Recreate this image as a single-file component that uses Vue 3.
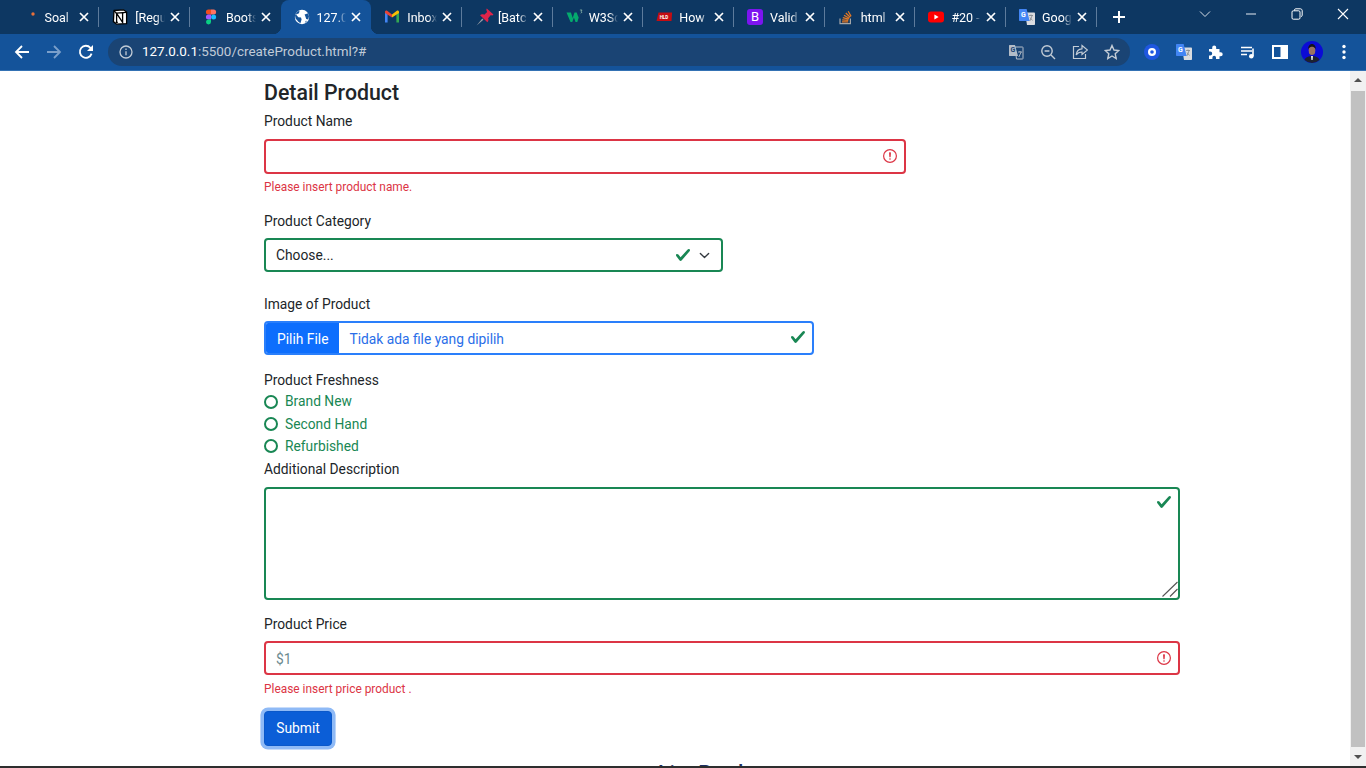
<template>
  <div class="screen">
    <div class="tabstrip">
      <div class="tabs">
        <div v-for="tab in tabs" :key="tab.icon" class="tab" :class="{ active: tab.active, nosep: tab.nosep }">
          <span class="favicon">
            <svg v-if="tab.icon === 'dot'" width="16" height="16" viewBox="0 0 16 16"><circle cx="11" cy="5" r="1.7" fill="#e8703a" /></svg>
            <svg v-else-if="tab.icon === 'notion'" width="16" height="16" viewBox="0 0 16 16">
              <path d="M2 1.5 11.5.8 14.6 3v11.6L4.6 15.2 1.4 12.6z" fill="#fff" stroke="#000" stroke-width="1.3" />
              <path d="M4.6 4.4v9M4.6 4.4l6 9V3.8M3.6 4.4h2.2M9.4 3.9h2.4M3.6 13.3h2.2M2 2l2.6 2.2 9.6-.8" fill="none" stroke="#000" stroke-width="1.3" />
            </svg>
            <svg v-else-if="tab.icon === 'figma'" width="16" height="16" viewBox="0 0 16 16">
              <path d="M8 0.5H5.4a2.5 2.5 0 0 0 0 5H8z" fill="#f24e1e" />
              <path d="M8 0.5h2.6a2.5 2.5 0 0 1 0 5H8z" fill="#ff7262" />
              <path d="M8 5.5H5.4a2.5 2.5 0 0 0 0 5H8z" fill="#a259ff" />
              <circle cx="10.6" cy="8" r="2.5" fill="#1abcfe" />
              <path d="M5.4 10.5H8V13a2.5 2.5 0 1 1-2.6-2.5z" fill="#0acf83" />
            </svg>
            <svg v-else-if="tab.icon === 'globe'" width="16" height="16" viewBox="0 0 16 16">
              <circle cx="8" cy="8" r="7.2" fill="#fff" />
              <path d="M5.6 1.6 5 4.2 2 5.6 4.4 8.2l2.6.4.6 2-1.2 3.6-2-1.4L1.6 9.6 1 6.4 3 3zM10.6 5.4l3.6-1.2.8 3.4-.8 3-2-.6-.8-2.4zM12 11.6l.8.6-2 1.8z" fill="#14539a" />
            </svg>
            <svg v-else-if="tab.icon === 'gmail'" width="16" height="16" viewBox="0 0 16 16">
              <path d="M1 13.5V4l2.6-.6V13.5z" fill="#4285f4" />
              <path d="M12.4 13.5V3.4L15 4v9.5z" fill="#34a853" />
              <path d="M1 4V2.8C1 1.6 2.3 1 3.2 1.7L8 5.4v3L1 4z" fill="#ea4335" />
              <path d="M15 4V2.8c0-1.2-1.3-1.8-2.2-1.1L8 5.4v3L15 4z" fill="#fbbc04" />
            </svg>
            <svg v-else-if="tab.icon === 'pin'" class="pin-icon" width="18" height="18" viewBox="0 0 16 16">
              <path d="M.5 15.500 5.600 9.400l1 1z" fill="#9aa0a6" />
              <path d="M9.600.5 15.500 5.800c-.6.9-1.500.9-2.300.5L10.800 9c.6 1.500.2 2.700-.7 3.600L3.600 6.400c1-.9 2.300-1.100 3.700-.4l2.600-2.500C9.300 2.300 8.900 1.300 9.600.5z" fill="#e0244a" />
            </svg>
            <svg v-else-if="tab.icon === 'w3'" class="wide-icon" width="17" height="16" viewBox="0 0 16 16">
              <path d="M0 3.500h4.400l1.800 5.600L8 3.500h2.200l1.800 5L13.800 3.500 10.800 13H9L7.400 8.600 5.800 13H4z" fill="#04aa6d" />
              <path d="M13.400 1h2.200l-1 1.200.9 1-1.300 1" fill="none" stroke="#9cc9b6" stroke-width=".7" />
            </svg>
            <svg v-else-if="tab.icon === 'hld'" class="wide-icon" width="17" height="16" viewBox="0 0 16 16">
              <path d="M2 3.500h13.600L15 12H0z" fill="#c40d12" />
              <text x="3.200" y="9.800" class="hld-mark">HLD</text>
            </svg>
            <span v-else-if="tab.icon === 'bootstrap'" class="bs-icon">B</span>
            <svg v-else-if="tab.icon === 'so'" width="16" height="16" viewBox="0 0 16 16">
              <path d="M2 9.500v5.200h10.400V9.500" fill="none" stroke="#a4a6a8" stroke-width="1.200" />
              <path d="M4 12.800h6.200M4.200 10.800l6.100.6M4.800 8.600l5.900 1.600M6 6.200l5.300 3M7.800 4l4.400 4.300M10.200 2.200l2.900 5.200" fill="none" stroke="#e87922" stroke-width="1.200" />
            </svg>
            <svg v-else-if="tab.icon === 'youtube'" width="16" height="16" viewBox="0 0 16 16">
              <rect x="0" y="2.400" width="16" height="11.200" rx="3" fill="#f00" />
              <path d="m6.400 5.600 4.200 2.400-4.200 2.400z" fill="#fff" />
            </svg>
            <svg v-else width="16" height="16" viewBox="0 0 16 16">
              <path d="M6 3.500h9.200c.5 0 .8.300.8.800v10.900c0 .5-.3.800-.8.800H8z" fill="#dadce0" />
              <path d="m10 6.500h4M12 5.500v1M10.800 12l2.400-5.500M11 8.500l2.500 3" fill="none" stroke="#80868b" stroke-width=".8" />
              <path d="M1 0h6.600l3 12H1c-.6 0-1-.4-1-1V1c0-.6.400-1 1-1z" fill="#4285f4" />
              <text x="2" y="8" class="g-mark">G</text>
            </svg>
          </span>
          <span class="tab-title">{{ tab.title }}</span>
          <svg class="tab-close" width="10" height="10" viewBox="0 0 10 10"><path d="m1 1 8 8M9 1 1 9" stroke="#fff" stroke-width="1.700" /></svg>
        </div>
        <svg class="new-tab" width="14" height="14" viewBox="0 0 14 14"><path d="M7 1v12M1 7h12" stroke="#fff" stroke-width="2" /></svg>
      </div>
      <div class="window-controls">
        <svg width="12" height="12" viewBox="0 0 12 12"><path d="m1 3.500 5 5 5-5" fill="none" stroke="#d5dde6" /></svg>
        <svg width="12" height="12" viewBox="0 0 12 12"><path d="M1 6h10" stroke="#e8edf3" /></svg>
        <svg width="12" height="12" viewBox="0 0 12 12"><path d="M3.500 2.500V2c0-.7.500-1.200 1.200-1.200h4.600c1.100 0 1.900.8 1.900 1.900v4.600c0 .7-.5 1.200-1.200 1.200" fill="none" stroke="#fff" /><rect x="1" y="2.800" width="8" height="8.400" rx="1.300" fill="none" stroke="#fff" /></svg>
        <svg width="12" height="12" viewBox="0 0 12 12"><path d="m1 1 10 10M11 1 1 11" stroke="#fff" stroke-width="1.100" /></svg>
      </div>
    </div>

    <div class="toolbar">
      <div class="nav-buttons">
        <svg width="16" height="16" viewBox="0 0 16 16"><path d="M15 8H2M8 2 2 8l6 6" fill="none" stroke="#fff" stroke-width="1.800" /></svg>
        <svg width="16" height="16" viewBox="0 0 16 16"><path d="M1 8h13M8 2l6 6-6 6" fill="none" stroke="#7b9fca" stroke-width="1.800" /></svg>
        <svg width="16" height="16" viewBox="0 0 16 16"><path d="M13.600 9.600A6 6 0 1 1 12.400 3.800L14.500 6" fill="none" stroke="#fff" stroke-width="1.800" /><path d="M15 1v6H9z" fill="#fff" /></svg>
      </div>
      <div class="omnibox">
        <svg width="14" height="14" viewBox="0 0 14 14"><circle cx="7" cy="7" r="6" fill="none" stroke="#c3ccd6" stroke-width="1.300" /><path d="M7 6.200v4M7 3.600v1.400" stroke="#c3ccd6" stroke-width="1.300" /></svg>
        <span class="url"><b>127.0.0.1</b>:5500/createProduct.html?#</span>
        <span class="omni-actions">
          <svg width="16" height="16" viewBox="0 0 16 16">
            <path d="M7 3h7.500c.3 0 .5.200.5.500v11c0 .3-.2.500-.5.500H8.500z" fill="none" stroke="#b4bdc8" />
            <path d="M1.500 1H7l3 11H1.500c-.3 0-.5-.2-.5-.5v-10c0-.3.200-.5.500-.5z" fill="#b4bdc8" />
            <path d="M10 8h4M12 7v1M10.800 13l2.400-5" fill="none" stroke="#b4bdc8" stroke-width=".9" />
            <text x="2.400" y="8.400" class="g-mark dark">G</text>
          </svg>
          <svg width="16" height="16" viewBox="0 0 16 16"><circle cx="7" cy="7" r="5.200" fill="none" stroke="#c3ccd6" stroke-width="1.400" /><path d="m11 11 4 4M4.600 7h4.800" stroke="#c3ccd6" stroke-width="1.400" /></svg>
          <svg width="16" height="16" viewBox="0 0 16 16"><path d="M7 2.500H1.500V14.500h12V10" fill="none" stroke="#c3ccd6" stroke-width="1.200" /><path d="M10 1.500 15.500 6 10 10.500V8C7.500 8 5.500 9 4.200 11c.3-3.500 2.600-6 5.800-6.200z" fill="none" stroke="#c3ccd6" stroke-width="1.200" /></svg>
          <svg width="16" height="16" viewBox="0 0 16 16"><path d="m8 1.500 2 4.500 4.800.5-3.600 3.200 1 4.800L8 12l-4.200 2.500 1-4.800L1.200 6.500 6 6z" fill="none" stroke="#c3ccd6" stroke-width="1.400" /></svg>
        </span>
      </div>
      <div class="extensions">
        <svg width="16" height="16" viewBox="0 0 16 16"><circle cx="8" cy="8" r="8" fill="#1f57e0" /><circle cx="8" cy="8" r="4" fill="#fff" /><circle cx="8" cy="8" r="1.800" fill="#1f57e0" /></svg>
        <svg width="16" height="16" viewBox="0 0 16 16">
          <path d="M6 3.500h9.200c.5 0 .8.300.8.800v10.900c0 .5-.3.800-.8.800H8z" fill="#dadce0" />
          <path d="m10 6.500h4M12 5.500v1M10.800 12l2.400-5.500M11 8.500l2.500 3" fill="none" stroke="#80868b" stroke-width=".8" />
          <path d="M1 0h6.600l3 12H1c-.6 0-1-.4-1-1V1c0-.6.400-1 1-1z" fill="#4285f4" />
          <text x="2" y="8" class="g-mark">G</text>
        </svg>
        <svg width="16" height="16" viewBox="0 0 16 16"><path d="M1 5h3.200V3.600a2 2 0 0 1 4 0V5H11.500v3.200h1.200a2 2 0 0 1 0 4h-1.200V15H8v-1.400a1.800 1.800 0 0 0-3.600 0V15H1v-3.600h1.200a2 2 0 0 0 0-4H1z" fill="#fff" /></svg>
        <svg width="16" height="16" viewBox="0 0 16 16"><path d="M1 3.500h11M1 7h11M1 10.500h6" stroke="#fff" stroke-width="1.300" /><path d="M13 4.500V12" stroke="#fff" stroke-width="1.600" /><circle cx="11.300" cy="12.300" r="2.300" fill="#fff" /></svg>
        <svg width="16" height="16" viewBox="0 0 16 16"><path d="M1 2h14v12H1z" fill="none" stroke="#fff" stroke-width="2" /><rect x="8.500" y="2" width="6" height="12" fill="#fff" /></svg>
        <svg width="22" height="22" viewBox="0 0 22 22">
          <circle cx="11" cy="11" r="11" fill="#0b0bd6" />
          <path d="M3.500 19c1-3 4.500-4 7.500-4s6.500 1 7.500 4a11 11 0 0 1-15 0z" fill="#1c2230" />
          <ellipse cx="11" cy="9.500" rx="3.300" ry="4.600" fill="#9c7361" />
          <path d="M7.300 8c-.3-3.500 2-5 3.700-5s4 1.500 3.700 5c-1-1.600-2.500-2.200-3.700-2.200S8.300 6.400 7.300 8z" fill="#15131a" />
          <path d="M10 15h2l-.4 4h-1.200z" fill="#f1f1f1" />
        </svg>
        <svg width="4" height="16" viewBox="0 0 4 16"><circle cx="2" cy="2.500" r="1.700" fill="#fff" /><circle cx="2" cy="8" r="1.700" fill="#fff" /><circle cx="2" cy="13.500" r="1.700" fill="#fff" /></svg>
      </div>
    </div>

    <div class="viewport">
      <main class="page">
        <form class="product-form" @submit.prevent>
          <h2 class="title">Detail Product</h2>

          <label class="field-label first">Product Name</label>
          <div class="control w70">
            <input class="input invalid" type="text" />
            <svg class="state-icon" width="16" height="16" viewBox="0 0 12 12"><circle cx="6" cy="6" r="4.800" fill="none" stroke="#dc3545" stroke-width=".9" /><path d="M5.800 3.600h.4L6 6.500z" fill="#dc3545" stroke="#dc3545" stroke-linejoin="round" /><circle cx="6" cy="8.200" r=".6" fill="#dc3545" /></svg>
          </div>
          <p class="feedback">Please insert product name.</p>

          <label class="field-label">Product Category</label>
          <div class="control w50 select-gap">
            <select class="input valid select"><option>Choose...</option></select>
            <svg class="state-icon select-check" width="16" height="16" viewBox="0 0 8 8"><path fill="#198754" d="M2.300 6.730.6 4.530c-.4-1.040.46-1.400 1.100-.8l1.100 1.400 3.400-3.800c.6-.63 1.600-.27 1.200.7l-4 4.600c-.43.500-.8.400-1.100.1z" /></svg>
            <svg class="state-icon" width="11" height="11" viewBox="0 0 16 16"><path fill="none" stroke="#343a40" stroke-linecap="round" stroke-linejoin="round" stroke-width="2" d="m2 5 6 6 6-6" /></svg>
          </div>

          <label class="field-label">Image of Product</label>
          <div class="control w60 gap-bottom">
            <div class="file-input">
              <span class="file-button">Pilih File</span>
              <span class="file-name">Tidak ada file yang dipilih</span>
            </div>
            <svg class="state-icon" width="16" height="16" viewBox="0 0 8 8"><path fill="#198754" d="M2.300 6.730.6 4.530c-.4-1.040.46-1.400 1.100-.8l1.100 1.400 3.400-3.800c.6-.63 1.600-.27 1.200.7l-4 4.600c-.43.500-.8.400-1.100.1z" /></svg>
          </div>

          <div class="field-label tight">Product Freshness</div>
          <label v-for="item in freshness" :key="item" class="radio-row">
            <input class="radio" type="radio" name="freshness" />
            <span>{{ item }}</span>
          </label>

          <label class="field-label">Additional Description</label>
          <div class="control area-wrap">
            <textarea class="input valid area"></textarea>
            <svg class="state-icon area-check" width="16" height="16" viewBox="0 0 8 8"><path fill="#198754" d="M2.300 6.730.6 4.530c-.4-1.040.46-1.400 1.100-.8l1.100 1.400 3.400-3.800c.6-.63 1.600-.27 1.200.7l-4 4.600c-.43.500-.8.400-1.100.1z" /></svg>
            <svg class="grip" width="16" height="16" viewBox="0 0 16 16"><path d="M.5 15.500 15.500 1M8 15.500l7.500-7.500" fill="none" stroke="#555" stroke-width="1.100" /></svg>
          </div>

          <label class="field-label">Product Price</label>
          <div class="control">
            <input class="input invalid" type="text" placeholder="$1" />
            <svg class="state-icon" width="16" height="16" viewBox="0 0 12 12"><circle cx="6" cy="6" r="4.800" fill="none" stroke="#dc3545" stroke-width=".9" /><path d="M5.800 3.600h.4L6 6.500z" fill="#dc3545" stroke="#dc3545" stroke-linejoin="round" /><circle cx="6" cy="8.200" r=".6" fill="#dc3545" /></svg>
          </div>
          <p class="feedback">Please insert price product .</p>

          <button class="submit" type="submit">Submit</button>
        </form>
        <h2 class="list-title">List Product</h2>
      </main>

      <div class="scrollbar">
        <span class="arrow up"></span>
        <span class="thumb"></span>
        <span class="arrow down"></span>
      </div>
    </div>
    <div class="taskbar-edge"></div>
  </div>
</template>

<script setup>
const tabs = [
  { icon: 'dot', title: 'Soal' },
  { icon: 'notion', title: '[Regu' },
  { icon: 'figma', title: 'Boots', nosep: true },
  { icon: 'globe', title: '127.0', active: true, nosep: true },
  { icon: 'gmail', title: 'Inbox' },
  { icon: 'pin', title: '[Batc' },
  { icon: 'w3', title: 'W3Sc' },
  { icon: 'hld', title: 'How' },
  { icon: 'bootstrap', title: 'Valid' },
  { icon: 'so', title: 'html' },
  { icon: 'youtube', title: '#20 -' },
  { icon: 'translate', title: 'Goog' },
]

const freshness = ['Brand New', 'Second Hand', 'Refurbished']
</script>

<style>
html, body {
  margin: 0;
  overflow: hidden;
}
</style>

<style scoped>
.screen {
  width: 1366px;
  height: 768px;
  display: flex;
  flex-direction: column;
  overflow: hidden;
  font-family: Roboto, "Noto Sans", sans-serif;
  background: #fff;
}

.tabstrip {
  height: 34px;
  flex: none;
  display: flex;
  justify-content: space-between;
  background: #0d3762;
}

.tabs {
  display: flex;
  align-items: stretch;
  padding-left: 8.5px;
}

.tab {
  position: relative;
  width: 90.7px;
  box-sizing: border-box;
  padding: 0 10px 0 13px;
  display: flex;
  align-items: center;
  color: #fff;
  font-size: 12.5px;
}

.tab::after {
  content: "";
  position: absolute;
  right: 0;
  top: 7px;
  height: 20px;
  width: 1px;
  background: #5d7b9c;
}

.tab.nosep::after {
  display: none;
}

.tab.active {
  background: #14539a;
  border-radius: 8px 8px 0 0;
}

.tab.active::before {
  content: "";
  position: absolute;
  left: -8px;
  right: -8px;
  bottom: 0;
  height: 8px;
  z-index: 0;
  background:
    radial-gradient(circle at 0 0, transparent 8px, #14539a 8.5px) left bottom / 8px 8px no-repeat,
    radial-gradient(circle at 100% 0, transparent 8px, #14539a 8.5px) right bottom / 8px 8px no-repeat;
}

.favicon {
  width: 16px;
  height: 16px;
  flex: none;
  display: flex;
  position: relative;
  z-index: 1;
}

.pin-icon {
  flex: none;
  margin: -1px 0 0 1px;
}

.wide-icon {
  flex: none;
}

.bs-icon {
  width: 16px;
  height: 16px;
  border-radius: 3px;
  background: #7c14f0;
  color: #fff;
  font-size: 13px;
  line-height: 16px;
  text-align: center;
}

.g-mark {
  font-size: 7px;
  font-weight: 700;
  fill: #fff;
}

.g-mark.dark {
  fill: #1a4474;
}

.hld-mark {
  font-size: 4.5px;
  font-weight: 700;
  fill: #fff;
}

.tab-title {
  flex: 1;
  min-width: 0;
  margin-left: 7px;
  white-space: nowrap;
  overflow: hidden;
  -webkit-mask-image: linear-gradient(to right, #000 70%, transparent 100%);
  mask-image: linear-gradient(to right, #000 70%, transparent 100%);
  position: relative;
  z-index: 1;
}

.tab-close {
  flex: none;
  margin-left: 5px;
  position: relative;
  z-index: 1;
}

.new-tab {
  align-self: center;
  margin-left: 15px;
}

.window-controls {
  display: flex;
  align-items: center;
  gap: 34px;
  height: 28px;
  padding-right: 17px;
}

.toolbar {
  height: 36px;
  flex: none;
  display: flex;
  align-items: center;
  background: #14539a;
  border-bottom: 1px solid #3472b4;
}

.nav-buttons {
  display: flex;
  gap: 16px;
  padding-left: 14px;
  width: 94px;
  flex: none;
}

.omnibox {
  width: 1022px;
  height: 28px;
  margin-top: -1px;
  box-sizing: border-box;
  flex: none;
  display: flex;
  align-items: center;
  padding: 0 10px 0 11px;
  border-radius: 14px;
  background: #1a4474;
}

.url {
  margin-left: 9px;
  font-size: 13.45px;
  color: #c0cbd8;
}

.url b {
  font-weight: 400;
  color: #fff;
}

.omni-actions {
  margin-left: auto;
  display: flex;
  gap: 16px;
}

.extensions {
  display: flex;
  align-items: center;
  gap: 16px;
  padding-left: 14px;
}

.extensions svg:nth-last-child(2) {
  margin: 0 -3px;
}

.extensions svg:last-child {
  margin-left: 6px;
}

.viewport {
  flex: 1;
  min-height: 0;
  display: flex;
}

.page {
  flex: 1;
  min-width: 0;
  overflow: hidden;
  padding: 9px 0 0 264px;
  color: #212529;
  font-size: 13.8px;
  line-height: 21.6px;
}

.product-form {
  width: 916px;
}

.title {
  margin: 0 0 5px;
  font-size: 21.3px;
  line-height: 26px;
  font-weight: 500;
}

.field-label {
  display: block;
  line-height: 23.6px;
  margin-bottom: 4.5px;
}

.field-label.first {
  line-height: 21.6px;
  margin-bottom: 6.5px;
}

.field-label.tight {
  margin-bottom: -2px;
}

.control {
  position: relative;
}

.w70 {
  width: 642px;
}

.w60 {
  width: 550px;
}

.w50 {
  width: 459px;
}

.select-gap {
  margin-bottom: 20.5px;
}

.gap-bottom {
  margin-bottom: 13.5px;
}

.area-wrap {
  margin-top: 5.5px;
  margin-bottom: 13px;
}

.input {
  display: block;
  width: 100%;
  height: 34.5px;
  box-sizing: border-box;
  margin: 0;
  padding: 2px 10px 0;
  border-radius: 4px;
  font: inherit;
  color: #212529;
  background: #fff;
  outline: none;
}

.input::placeholder {
  color: #6c8a90;
}

.invalid {
  border: 2px solid #dc3545;
}

.valid {
  border: 2px solid #198754;
}

.select {
  appearance: none;
  -webkit-appearance: none;
}

.area {
  height: 113px;
  resize: none;
}

.state-icon {
  position: absolute;
  right: 8px;
  top: 9px;
}

.select-check {
  right: 32px;
  top: 9px;
}

.area-check {
  top: 7px;
}

.grip {
  position: absolute;
  right: 2px;
  bottom: 3px;
  pointer-events: none;
}

.w60 .state-icon {
  top: 8px;
}

.w50 .state-icon:last-child {
  right: 13px;
  top: 12px;
}

.feedback {
  margin: 4.5px 0 12.5px;
  font-size: 11.9px;
  line-height: 19px;
  color: #dc3545;
}

.file-input {
  display: flex;
  height: 34.5px;
  box-sizing: border-box;
  border: 2px solid #2a7ffb;
  border-radius: 4px;
  overflow: hidden;
}

.file-button {
  padding: 0 11px;
  background: #0d6efd;
  color: #fff;
  line-height: 33px;
}

.file-name {
  padding-left: 10px;
  color: #2a6ee8;
  line-height: 33px;
}

.radio-row {
  display: flex;
  align-items: center;
  gap: 7px;
  height: 22.4px;
  color: #198754;
}

.radio-row span {
  padding-top: 1px;
}

.radio {
  appearance: none;
  -webkit-appearance: none;
  width: 14px;
  height: 14px;
  margin: 0;
  box-sizing: border-box;
  border: 2px solid #198754;
  border-radius: 50%;
  background: #fff;
}

.submit {
  display: block;
  width: 68px;
  height: 34.5px;
  margin: 0;
  padding: 0;
  border: 1px solid #0a58ca;
  border-radius: 4px;
  background: #0b5ed7;
  color: #fff;
  font: inherit;
  box-shadow: 0 0 0 3.6px #8fbaf6;
}

.list-title {
  margin: 15px 0 0 394px;
  font-size: 21.3px;
  line-height: 26px;
  font-weight: 500;
  color: #1c2f63;
  white-space: nowrap;
}

.scrollbar {
  width: 16px;
  flex: none;
  display: flex;
  flex-direction: column;
  align-items: center;
  background: #f1f1f1;
}

.arrow {
  flex: none;
  width: 0;
  height: 0;
  border-left: 4px solid transparent;
  border-right: 4px solid transparent;
}

.arrow.up {
  margin: 7px 0 9px;
  border-bottom: 4px solid #505050;
}

.arrow.down {
  margin: 8px 0 7px;
  border-top: 4px solid #505050;
}

.thumb {
  flex: 1;
  width: 14px;
  background: #c1c1c1;
}

.taskbar-edge {
  height: 2px;
  flex: none;
  background: #2e2e2e;
}
</style>
